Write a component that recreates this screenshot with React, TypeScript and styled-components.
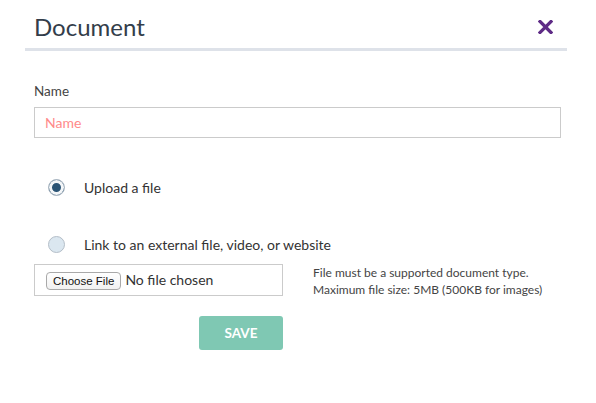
import styled, { createGlobalStyle } from 'styled-components';

const GlobalStyle = createGlobalStyle`
  html, body {
    margin: 0;
    padding: 0;
    background: #fff;
  }
  body {
    font-family: Lato, 'Open Sans', sans-serif;
    color: #333;
  }
`;

// Modal frame
const Dialog = styled.div`
  width: 596px;
  height: 403px;
  background: #fff;
`;

const Header = styled.div`
  display: flex;
  align-items: center;
  justify-content: space-between;
  margin: 0 29px 0 25px;
  padding: 12px 14px 7px 9px;
  border-bottom: 3px solid #dee2e9;
`;

const Title = styled.h2`
  margin: 0;
  font-size: 24px;
  line-height: 29px;
  font-weight: 400;
  color: #333d4a;
`;

const CloseButton = styled.button`
  display: flex;
  align-items: center;
  justify-content: center;
  width: 15px;
  height: 15px;
  padding: 0;
  border: none;
  background: none;
  cursor: pointer;
`;

const Body = styled.form`
  display: flex;
  flex-direction: column;
  padding: 32px 35px 0 34px;
`;

const FieldLabel = styled.label`
  font-size: 13.5px;
  line-height: 16px;
  color: #444;
  margin-bottom: 8px;
`;

const TextInput = styled.input`
  box-sizing: border-box;
  height: 31px;
  width: 100%;
  padding: 0 10px;
  border: 1px solid #cbcbcb;
  border-radius: 0;
  font-family: Lato, sans-serif;
  font-size: 14px;
  color: #333;
  outline: none;
  &::placeholder {
    color: #ff8a8a;
  }
`;

const RadioGroup = styled.div`
  display: flex;
  flex-direction: column;
  gap: 37px;
  margin-top: 39px;
`;

const RadioRow = styled.label`
  display: flex;
  align-items: center;
  height: 20px;
  padding-left: 14px;
  gap: 19px;
  font-size: 14px;
  color: #333;
  cursor: pointer;
`;

const Radio = styled.input.attrs({ type: 'radio' })`
  appearance: none;
  box-sizing: border-box;
  width: 17px;
  height: 17px;
  margin: 0;
  border-radius: 50%;
  border: 1px solid #b4bec8;
  background: #dbe7f0;
  &:checked {
    background: #2b5475;
    box-shadow: inset 0 0 0 3px #f4f6f8;
  }
`;

const UploadRow = styled.div`
  display: grid;
  grid-template-columns: 249px 1fr;
  column-gap: 30px;
  row-gap: 18px;
  margin-top: 10px;
`;

const FileBox = styled.label`
  box-sizing: border-box;
  display: flex;
  align-items: center;
  gap: 4px;
  height: 32px;
  padding: 0 11px 1px;
  border: 1px solid #cbcbcb;
  font-size: 14px;
  color: #333;
  cursor: pointer;
`;

const ChooseButton = styled.span`
  box-sizing: border-box;
  display: inline-flex;
  align-items: center;
  height: 18px;
  padding: 0 6px;
  border: 1px solid #a9a9a9;
  border-radius: 4px;
  background: linear-gradient(#fff, #f1f1f1);
  font-family: 'Liberation Sans', Arial, sans-serif;
  font-size: 11.5px;
  color: #111;
  margin-top: 2px;
`;

const HelpText = styled.p`
  margin: 0;
  font-size: 12px;
  line-height: 17px;
  color: #444;
`;

const SaveButton = styled.button`
  justify-self: end;
  width: 84px;
  height: 34px;
  border: none;
  border-radius: 3px;
  background: #7fc8b3;
  color: #fff;
  font-family: Lato, sans-serif;
  font-weight: 700;
  font-size: 13.5px;
  cursor: pointer;
`;

const CloseIcon = () => (
  <svg width="15" height="14" viewBox="0 0 15 14">
    <path d="M2 1.5 L13 12.5 M13 1.5 L2 12.5" stroke="#5e2b86" strokeWidth="3.2" strokeLinecap="square" />
  </svg>
);

export default function App() {
  return (
    <>
      <GlobalStyle />
      <Dialog>
        <Header>
          <Title>Document</Title>
          <CloseButton type="button" aria-label="Close">
            <CloseIcon />
          </CloseButton>
        </Header>
        <Body onSubmit={e => e.preventDefault()}>
          <FieldLabel htmlFor="doc-name">Name</FieldLabel>
          <TextInput id="doc-name" placeholder="Name" />
          <RadioGroup>
            <RadioRow>
              <Radio name="source" defaultChecked />
              Upload a file
            </RadioRow>
            <RadioRow>
              <Radio name="source" />
              Link to an external file, video, or website
            </RadioRow>
          </RadioGroup>
          <UploadRow>
            <FileBox>
              <ChooseButton>Choose File</ChooseButton>
              No file chosen
            </FileBox>
            <HelpText>
              File must be a supported document type.
              <br />
              Maximum file size: 5MB (500KB for images)
            </HelpText>
            <SaveButton type="submit">SAVE</SaveButton>
          </UploadRow>
        </Body>
      </Dialog>
    </>
  );
}
